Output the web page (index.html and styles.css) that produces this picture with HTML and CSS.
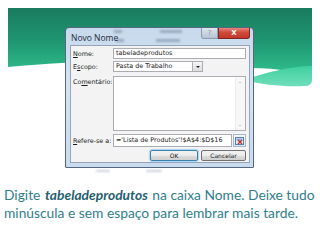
FILE: index.html
```html
<!DOCTYPE html>
<html lang="pt">
<head>
<meta charset="utf-8">
<link rel="stylesheet" href="styles.css">
</head>
<body>
<div class="slide">
  <svg class="banner" width="320" height="100" viewBox="0 0 320 100">
    <defs>
      <linearGradient id="g1" x1="0" y1="0" x2="0" y2="1">
        <stop offset="0" stop-color="#1a7b5e"/>
        <stop offset="0.45" stop-color="#1f9570"/>
        <stop offset="1" stop-color="#33c592"/>
      </linearGradient>
      <linearGradient id="g2" x1="0" y1="0" x2="0" y2="1">
        <stop offset="0" stop-color="#3fcf9e"/>
        <stop offset="1" stop-color="#6fdfbb"/>
      </linearGradient>
    </defs>
    <path d="M8 8 H312 V80 C300 72 280 68 250 68 C180 66 120 56 8 67 Z" fill="url(#g1)"/>
    <path d="M245 80 C265 72 295 66 312 66 V80 Q312 86 304 86 C285 87 262 85 245 80 Z" fill="url(#g2)"/>
  </svg>

  <div class="dialog">
    <div class="titlebar">
      <span class="ghost g1"></span>
      <span class="ghost g2"></span>
      <span class="ghost g3"></span>
      <span class="ghost g4"></span>
      <span class="title">Novo Nome</span>
      <div class="tbtns">
        <span class="help">?</span>
        <span class="close">X</span>
      </div>
    </div>
    <div class="client">
      <div class="row r-nome">
        <span class="label"><u>N</u>ome:</span>
        <span class="field f-nome">tabeladeprodutos</span>
      </div>
      <div class="row r-escopo">
        <span class="label">E<u>s</u>copo:</span>
        <span class="field f-escopo">Pasta de Trabalho<span class="drop"><span class="tri"></span></span></span>
      </div>
      <div class="row r-coment">
        <span class="label">Co<u>m</u>entário:</span>
        <span class="field f-coment"><span class="scroll"><span class="up"></span><span class="down"></span></span></span>
      </div>
      <div class="row r-ref">
        <span class="label"><u>R</u>efere-se a:</span>
        <span class="field f-ref">='Lista de Produtos'!$A$4:$D$16</span>
        <span class="rangebtn"><svg width="9" height="8" viewBox="0 0 9 8"><rect x="0.5" y="0.5" width="8" height="7" fill="#dfe8f4" stroke="#5b7fae"/><rect x="1.5" y="1.5" width="6" height="2" fill="#8fb0da"/><path d="M3 3 L7 7 M7 3 L3 7" stroke="#c0302a" stroke-width="1.3"/></svg></span>
      </div>
      <div class="buttons">
        <span class="btn ok">OK</span>
        <span class="btn cancel">Cancelar</span>
      </div>
    </div>
    <span class="ghost b1"></span>
    <span class="ghost b2"></span>
  </div>

  <p class="caption"><span class="line">Digite <b><i>tabeladeprodutos</i></b> na caixa Nome. Deixe tudo</span><span class="line">minúscula e sem espaço para lembrar mais tarde.</span></p>
</div>
</body>
</html>
```

FILE: styles.css
```css
html, body {
  margin: 0;
  padding: 0;
  background: #ffffff;
}
.slide {
  position: relative;
  width: 320px;
  height: 240px;
  overflow: hidden;
  padding-top: 27px;
  box-sizing: border-box;
}
.banner {
  position: absolute;
  left: 0;
  top: 0;
}
.dialog {
  position: relative;
  margin-left: 65px;
  width: 189px;
  height: 141px;
  box-sizing: border-box;
  border: 1px solid #56667c;
  border-radius: 4px 4px 1px 1px;
  background: linear-gradient(180deg, #c7d9ec 0%, #d6e4f2 40%, #c9dbee 100%);
  display: flex;
  flex-direction: column;
  padding: 0 3px 4px 4px;
  font-family: "DejaVu Sans", sans-serif;
}
.titlebar {
  position: relative;
  height: 17px;
  flex: none;
}
.title {
  position: absolute;
  left: 1px;
  top: 4px;
  font-family: "Open Sans", sans-serif;
  font-size: 8.5px;
  color: #1e2a3a;
}
.ghost {
  position: absolute;
  height: 3px;
  background: #8796ad;
  filter: blur(1px);
  opacity: 0.7;
}
.g1 { left: 44px; top: 2px; width: 8px; }
.g2 { left: 90px; top: 2px; width: 22px; }
.g3 { left: 86px; top: 11px; width: 24px; }
.g4 { left: 46px; top: 11px; width: 8px; }
.tbtns {
  position: absolute;
  right: 0;
  top: 0;
  display: flex;
}
.help {
  width: 15px;
  height: 10px;
  background: linear-gradient(180deg, #dfe6ee, #b6c3d2);
  border: 1px solid #8e9bb0;
  border-top: none;
  border-radius: 0 0 0 3px;
  font-family: "DejaVu Sans", sans-serif;
  font-size: 7px;
  color: #8894a6;
  text-align: center;
  line-height: 10px;
}
.close {
  width: 30px;
  height: 10px;
  background: linear-gradient(180deg, #e8857a 0%, #cf4a3b 45%, #c0382a 100%);
  border: 1px solid #7a2a22;
  border-top: none;
  border-radius: 0 0 3px 0;
  font-family: "DejaVu Sans", sans-serif;
  font-weight: bold;
  font-size: 7px;
  color: #ffffff;
  text-align: center;
  line-height: 10px;
}
.client {
  flex: 1;
  background: #f3f3f3;
  border: 1px solid #93a3b8;
  position: relative;
  display: flex;
  flex-direction: column;
  padding: 2px 3px 0 2px;
  font-size: 6.4px;
  color: #1a1a1a;
}
.row {
  display: flex;
  align-items: flex-start;
}
.label {
  width: 40px;
  flex: none;
  font-family: "DejaVu Sans", sans-serif;
  font-size: 6.4px;
  padding-top: 2px;
}
.field {
  display: block;
  background: #ffffff;
  border: 1px solid #abadb3;
  box-sizing: border-box;
  font-family: "DejaVu Sans", sans-serif;
  font-size: 6.4px;
  line-height: 9px;
  padding-left: 2px;
  white-space: nowrap;
  position: relative;
}
.f-nome { width: 133px; height: 11px; }
.r-escopo { margin-top: 2px; }
.f-escopo { width: 90px; height: 11px; }
.drop {
  position: absolute;
  right: 0;
  top: 0;
  width: 9px;
  height: 9px;
  background: linear-gradient(180deg, #f6f6f6, #dcdcdc);
  border-left: 1px solid #b0b0b0;
  display: flex;
  align-items: center;
  justify-content: center;
}
.tri {
  width: 0;
  height: 0;
  border-left: 2px solid transparent;
  border-right: 2px solid transparent;
  border-top: 2px solid #222;
}
.r-coment { margin-top: 4px; }
.f-coment { width: 133px; height: 55px; }
.scroll {
  position: absolute;
  right: 0;
  top: 0;
  bottom: 0;
  width: 9px;
  background: #f7f7f7;
  border-left: 1px solid #ececec;
}
.up, .down {
  position: absolute;
  left: 3px;
  width: 0;
  height: 0;
  border-left: 1.5px solid transparent;
  border-right: 1.5px solid transparent;
}
.up { top: 5px; border-bottom: 1.5px solid #9a9a9a; }
.down { bottom: 4px; border-top: 1.5px solid #9a9a9a; }
.r-ref { margin-top: 3px; align-items: center; }
.r-ref .label { padding-top: 0; }
.f-ref { width: 119px; height: 13px; line-height: 11px; }
.rangebtn {
  width: 13px;
  height: 13px;
  margin-left: 1px;
  box-sizing: border-box;
  border: 1px solid #a9b6c8;
  background: linear-gradient(180deg, #f4f7fb, #dde5ef);
  display: flex;
  align-items: center;
  justify-content: center;
}
.buttons {
  display: flex;
  justify-content: flex-end;
  gap: 3px;
  margin-top: 3px;
}
.btn {
  height: 11px;
  box-sizing: border-box;
  border: 1px solid #707070;
  border-radius: 2px;
  background: linear-gradient(180deg, #f2f2f2 0%, #ebebeb 50%, #dddddd 51%, #cfcfcf 100%);
  font-family: "DejaVu Sans", sans-serif;
  font-size: 6px;
  line-height: 9px;
  text-align: center;
}
.ok {
  width: 48px;
  border-color: #3c7fb1;
  box-shadow: 0 0 1px 1px #a8d6f2;
}
.cancel { width: 45px; }
.b1 { left: 30px; top: 142px; width: 14px; height: 2px; background: #b8c2cf; }
.b2 { left: 80px; top: 142px; width: 16px; height: 2px; background: #b8c2cf; }
.caption {
  margin: 18px 0 0 4px;
  width: 316px;
  font-family: "Lato", sans-serif;
  font-size: 13.8px;
  line-height: 18px;
  color: #2f7e8b;
}
.line { display: block; white-space: nowrap; }
.caption b { font-weight: bold; color: #1f6070; margin: 0 1px; }
```
